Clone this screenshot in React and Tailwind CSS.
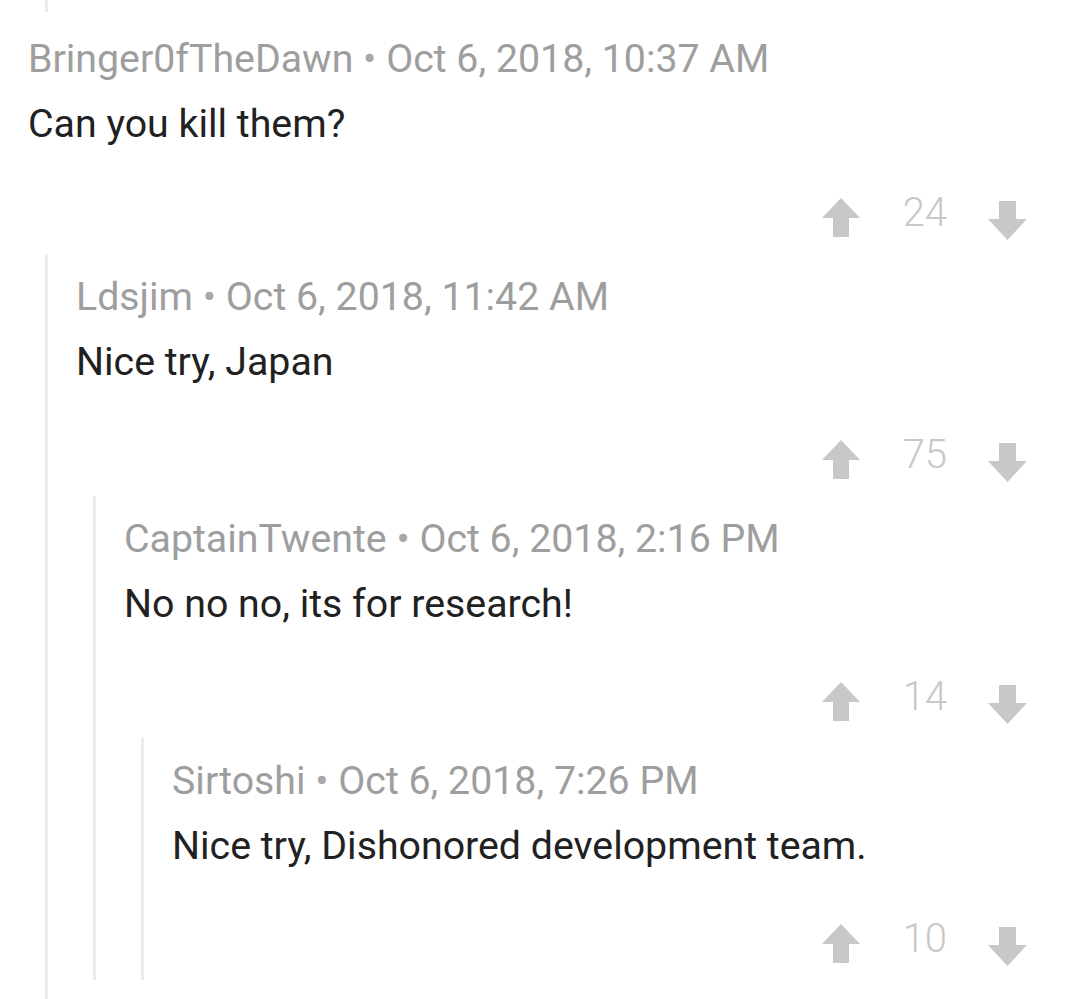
import React from 'react';

const thread = {
  author: 'Bringer0fTheDawn',
  time: 'Oct 6, 2018, 10:37 AM',
  body: 'Can you kill them?',
  score: 24,
  replies: [
    {
      author: 'Ldsjim',
      time: 'Oct 6, 2018, 11:42 AM',
      body: 'Nice try, Japan',
      score: 75,
      replies: [
        {
          author: 'CaptainTwente',
          time: 'Oct 6, 2018, 2:16 PM',
          body: 'No no no, its for research!',
          score: 14,
          replies: [
            {
              author: 'Sirtoshi',
              time: 'Oct 6, 2018, 7:26 PM',
              body: 'Nice try, Dishonored development team.',
              score: 10,
              replies: [],
            },
          ],
        },
      ],
    },
  ],
};

const UpArrow = () => (
  <svg width="38" height="39" viewBox="0 0 38 39" className="mt-[3px] shrink-0">
    <polygon points="19,0 38,20 27,20 27,39 11,39 11,20 0,20" fill="#c8c8c8" />
  </svg>
);

const DownArrow = () => (
  <svg width="39" height="39" viewBox="0 0 39 39" className="mt-[6px] shrink-0">
    <polygon points="11,0 28,0 28,18 39,18 19.5,39 0,18 11,18" fill="#c8c8c8" />
  </svg>
);

const Comment = ({ comment, depth }) => {
  return (
    <div>
      <div className="pt-[19px] pb-[13px]">
        <div className="text-[39.3px] leading-[48px] text-[#9e9e9e] whitespace-nowrap">
          {comment.author} <span className="text-[#a8a8a8]">•</span> {comment.time}
        </div>
        <div className="text-[39.3px] leading-[48px] text-[#212121] mt-[17px] whitespace-nowrap">
          {comment.body}
        </div>
        <div className={depth === 0 ? 'flex justify-end items-start mt-[47px] h-[46px]' : 'flex justify-end items-start mt-[51px] h-[46px]'}>
          <UpArrow />
          <span className="ml-[43px] mr-[41px] text-[40px] leading-[36px] font-light text-[#c8c8c8]">
            {comment.score}
          </span>
          <DownArrow />
        </div>
      </div>
      {comment.replies.length > 0 && (
        <div className={depth === 0 ? 'ml-[17px] border-l-[3px] border-[#ececec] pl-[28px] pb-[40px]' : 'ml-[17px] border-l-[3px] border-[#ececec] pl-[28px]'}>
          {comment.replies.map((reply, i) => (
            <Comment key={i} comment={reply} depth={depth + 1} />
          ))}
        </div>
      )}
    </div>
  );
};

export default function App() {
  return (
    <div className="w-[1075px] h-[999px] overflow-hidden bg-white font-['Roboto',sans-serif]">
      <div className="ml-[45px] w-[3px] h-[12px] bg-[#ececec]" />
      <div className="pl-[28px] pr-[48px] pt-[4px]">
        <Comment comment={thread} depth={0} />
      </div>
    </div>
  );
}
